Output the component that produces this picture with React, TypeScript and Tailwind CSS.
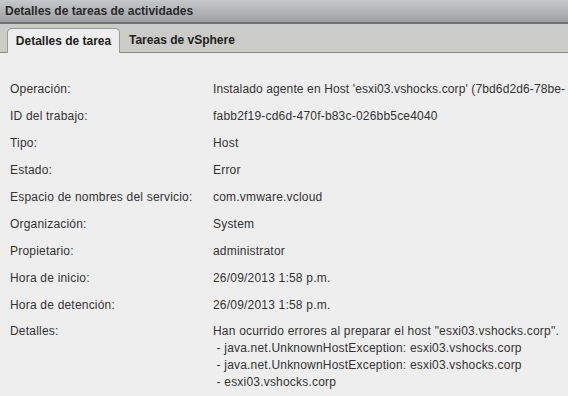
// Detalles de tareas de actividades — panel
const rows: { label: string; value: string }[] = [
  { label: "Operación:", value: "Instalado agente en Host 'esxi03.vshocks.corp' (7bd6d2d6-78be-" },
  { label: "ID del trabajo:", value: "fabb2f19-cd6d-470f-b83c-026bb5ce4040" },
  { label: "Tipo:", value: "Host" },
  { label: "Estado:", value: "Error" },
  { label: "Espacio de nombres del servicio:", value: "com.vmware.vcloud" },
  { label: "Organización:", value: "System" },
  { label: "Propietario:", value: "administrator" },
  { label: "Hora de inicio:", value: "26/09/2013 1:58 p.m." },
  { label: "Hora de detención:", value: "26/09/2013 1:58 p.m." },
];

const details = [
  'Han ocurrido errores al preparar el host "esxi03.vshocks.corp".',
  " - java.net.UnknownHostException: esxi03.vshocks.corp",
  " - java.net.UnknownHostException: esxi03.vshocks.corp",
  " - esxi03.vshocks.corp",
];

export default function App() {
  return (
    <div className="w-[568px] h-[396px] overflow-hidden bg-[#eeeeee] text-[12px] text-[#333] font-['Liberation_Sans',Arial,sans-serif] flex flex-col">
      {/* title bar */}
      <div className="h-[24px] shrink-0 flex items-center px-[5px] bg-gradient-to-b from-[#c7c8cc] to-[#9fa0a4] border-b-2 border-[#6e6f72] font-bold text-[#2a2a2a]">
        Detalles de tareas de actividades
      </div>

      {/* tabs */}
      <div className="h-[29px] shrink-0 flex items-end gap-[2px] pl-[7px] bg-[#cbccc7] border-b border-[#8a8a88] font-bold text-[#222]">
        <div className="h-[25px] w-[113px] -mb-px flex items-center justify-center bg-[#eeeeee] border border-b-0 border-[#9a9a98] rounded-t-[5px]">
          Detalles de tarea
        </div>
        <div className="h-[25px] px-[7px] flex items-center">Tareas de vSphere</div>
      </div>

      {/* body */}
      <div className="pt-[22px] pl-[10px] tracking-[0.2px]">
        {rows.map((r, i) => (
          <div key={r.label} className="h-[27px] flex items-center">
            <div className="w-[203px] shrink-0">{r.label}</div>
            <div className={i === 0 ? "whitespace-nowrap tracking-[0.12px]" : "whitespace-nowrap"}>
              {r.value}
            </div>
          </div>
        ))}
        <div className="flex pt-[5px] leading-[17px]">
          <div className="w-[203px] shrink-0">Detalles:</div>
          <div className="whitespace-pre">
            {details.map((d, i) => (
              <div key={i}>{d}</div>
            ))}
          </div>
        </div>
      </div>
    </div>
  );
}
